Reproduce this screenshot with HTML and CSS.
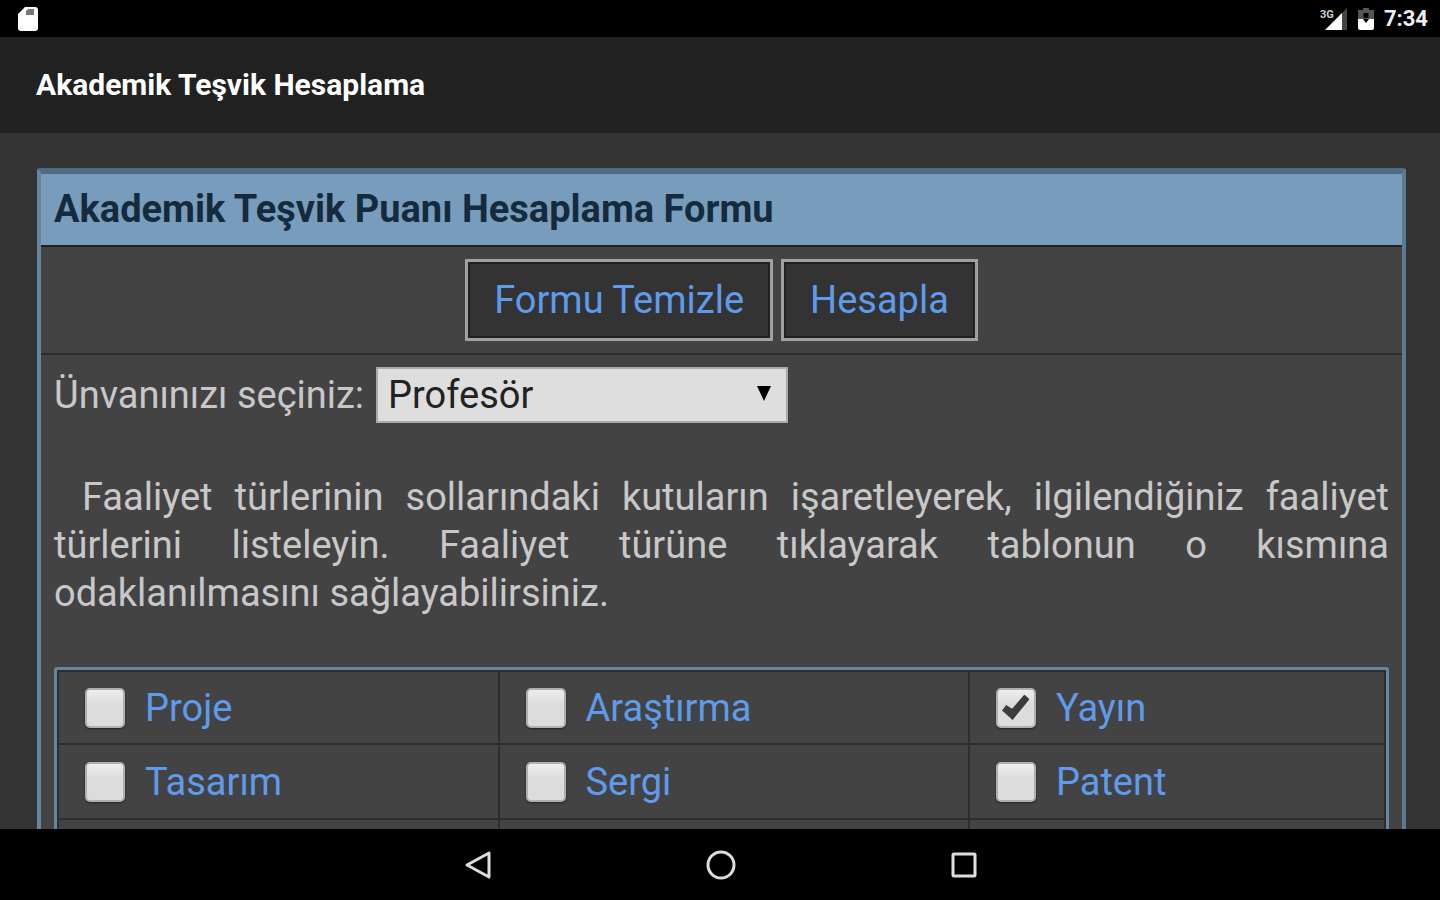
FILE: index.html
```html
<!DOCTYPE html>
<html lang="tr">
  <head>
    <meta charset="utf-8">
    <meta name="viewport" content="width=device-width, initial-scale=1">
    <title>Akademik Teşvik Hesaplama</title>
    <link rel="stylesheet" href="styles.css">
  </head>
  <body>
    <div class="status-bar">
      <svg class="sd-icon" width="20" height="24" viewBox="0 0 20 24">
        <path d="M7 0h10a3 3 0 0 1 3 3v18a3 3 0 0 1-3 3H3a3 3 0 0 1-3-3V7z" fill="#fff"/>
        <path d="M10 2h6v6H8V4z" fill="#777"/>
      </svg>
      <div class="status-right">
        <svg width="28" height="24" viewBox="0 0 28 24">
          <path d="M27 1v22h-6V7z" fill="#444"/>
          <path d="M22 6v17H5z" fill="#fff"/>
          <text class="network" x="0" y="11">3G</text>
        </svg>
        <svg width="16" height="22" viewBox="0 0 16 22">
          <path d="M5 0h6v2h5v9H0V2h5z" fill="#555"/>
          <path d="M0 11h5l3 4 3-4h5v9a2 2 0 0 1-2 2H2a2 2 0 0 1-2-2z" fill="#fff"/>
          <path d="M8 5v5" stroke="#000" stroke-width="5"/>
        </svg>
        <span class="clock">7:34</span>
      </div>
    </div>

    <header class="app-bar">
      <h1>Akademik Teşvik Hesaplama</h1>
    </header>

    <main class="content">
      <form class="panel">
        <h2 class="panel-title">Akademik Teşvik Puanı Hesaplama Formu</h2>
        <div class="buttons">
          <button type="reset" class="btn">Formu Temizle</button>
          <button type="button" class="btn">Hesapla</button>
        </div>
        <div class="panel-body">
          <div class="title-row">
            <label for="unvan">Ünvanınızı seçiniz:</label>
            <div class="select-wrap">
              <select id="unvan" name="unvan">
                <option>Profesör</option>
              </select>
              <svg class="arrow" width="14" height="15" viewBox="0 0 14 15"><path d="M0 0h14L7 15z" fill="#000"/></svg>
            </div>
          </div>
          <p class="info">Faaliyet türlerinin sollarındaki kutuların işaretleyerek, ilgilendiğiniz faaliyet türlerini listeleyin. Faaliyet türüne tıklayarak tablonun o kısmına odaklanılmasını&nbsp;sağlayabilirsiniz.</p>
          <table class="types">
            <colgroup>
              <col class="col-first">
              <col class="col-second">
              <col>
            </colgroup>
            <tr>
              <td><div class="type"><input type="checkbox" id="proje" aria-labelledby="proje-ad"><a href="#proje" id="proje-ad">Proje</a></div></td>
              <td><div class="type"><input type="checkbox" id="arastirma" aria-labelledby="arastirma-ad"><a href="#arastirma" id="arastirma-ad">Araştırma</a></div></td>
              <td><div class="type"><input type="checkbox" id="yayin" aria-labelledby="yayin-ad" checked><a href="#yayin" id="yayin-ad">Yayın</a></div></td>
            </tr>
            <tr>
              <td><div class="type"><input type="checkbox" id="tasarim" aria-labelledby="tasarim-ad"><a href="#tasarim" id="tasarim-ad">Tasarım</a></div></td>
              <td><div class="type"><input type="checkbox" id="sergi" aria-labelledby="sergi-ad"><a href="#sergi" id="sergi-ad">Sergi</a></div></td>
              <td><div class="type"><input type="checkbox" id="patent" aria-labelledby="patent-ad"><a href="#patent" id="patent-ad">Patent</a></div></td>
            </tr>
            <tr>
              <td></td>
              <td></td>
              <td></td>
            </tr>
          </table>
        </div>
      </form>
    </main>

    <nav class="nav-bar">
      <button type="button" aria-label="Geri">
        <svg width="30" height="32" viewBox="0 0 30 32"><path d="M26 4v24L4 16z" fill="none" stroke="#ddd" stroke-width="3" stroke-linejoin="round"/></svg>
      </button>
      <button type="button" aria-label="Ana ekran">
        <svg width="30" height="32" viewBox="0 0 30 32"><circle cx="15" cy="16" r="13" fill="none" stroke="#ddd" stroke-width="3"/></svg>
      </button>
      <button type="button" aria-label="Son uygulamalar">
        <svg width="30" height="32" viewBox="0 0 30 32"><rect x="4" y="5" width="22" height="22" rx="1" fill="none" stroke="#ddd" stroke-width="3"/></svg>
      </button>
    </nav>
  </body>
</html>
```
FILE: styles.css
```css
:root {
  --blue: #789dbc;
  --border: #64879f;
  --link: #5f9bec;
  --line: #2d2d2d;
  --panel: #434343;
  --text: #c8c8c8;
}

* {
  box-sizing: border-box;
}

body {
  margin: 0;
  height: 100vh;
  display: flex;
  flex-direction: column;
  overflow: hidden;
  background: #333;
  color: var(--text);
  font-family: Roboto, sans-serif;
  font-size: 38px;
  line-height: 48px;
}

.status-bar {
  flex: none;
  height: 37px;
  padding: 0 12px 0 18px;
  display: flex;
  align-items: center;
  justify-content: space-between;
  background: #000;
}

.status-right {
  display: flex;
  align-items: center;
  gap: 10px;
}

.network {
  fill: #ccc;
  font-size: 11px;
  font-weight: 700;
}

.clock {
  color: #eee;
  font-size: 22px;
  font-weight: 700;
  line-height: 36px;
}

.app-bar {
  flex: none;
  height: 96px;
  padding: 0 36px;
  display: flex;
  align-items: center;
  background: #212121;
}

.app-bar h1 {
  margin: 0;
  color: #fff;
  font-size: 30px;
  font-weight: 700;
  line-height: 36px;
}

.content {
  flex: 1;
  min-height: 0;
  overflow: hidden;
  padding: 35px 34px 0 37px;
}

.panel {
  border: 4px solid var(--border);
  border-color: #4f6c84 #5c7b93 #4f6c84 #64879f;
  border-radius: 3px;
  background: var(--panel);
}

.panel-title {
  margin: 0;
  padding: 11px 13px 12px;
  border-top: 2px solid #4f6c84;
  border-bottom: 2px solid #222;
  background: var(--blue);
  color: #152b3d;
  font-size: 38px;
  font-weight: 700;
}

.buttons {
  display: flex;
  justify-content: center;
  gap: 8px;
  padding: 12px;
  border-bottom: 2px solid var(--line);
}

.btn {
  height: 82px;
  padding: 0 26px;
  border: 3px solid #a0a0a0;
  background: #333;
  box-shadow: inset 0 0 0 2px #202020;
  color: var(--link);
  font: inherit;
}

.panel-body {
  padding: 12px 13px;
}

.title-row {
  display: flex;
  align-items: center;
  gap: 12px;
}

.select-wrap {
  position: relative;
}

.select-wrap select {
  display: block;
  width: 412px;
  height: 56px;
  padding: 0 10px;
  appearance: none;
  border: 2px solid #aaa;
  border-radius: 0;
  background: #dedede;
  color: #222;
  font: inherit;
}

.arrow {
  position: absolute;
  right: 17px;
  top: 19px;
  pointer-events: none;
}

.info {
  margin: 50px 0;
  text-align: justify;
  text-indent: 28px;
}

.types {
  width: 100%;
  table-layout: fixed;
  border: 3px solid var(--border);
  border-radius: 3px;
  border-spacing: 0;
}

.col-first {
  width: 33.3%;
}

.col-second {
  width: 35.4%;
}

.types td {
  height: 75px;
  padding: 0 26px;
  border-bottom: 2px solid var(--line);
  border-right: 2px solid var(--line);
}

.types tr:first-child td {
  border-top: 2px solid var(--line);
}

.types td:first-child {
  border-left: 2px solid var(--line);
}

.type {
  display: flex;
  align-items: center;
  gap: 20px;
}

.type a {
  color: var(--link);
  text-decoration: none;
}

.type input {
  appearance: none;
  width: 40px;
  height: 40px;
  margin: 0;
  border: 2px solid #b0b0b0;
  border-radius: 5px;
  background: linear-gradient(#eee, #dcdcdc 40%);
  box-shadow: 0 1px 2px #222;
}

.type input:checked::before {
  content: "";
  display: block;
  width: 28px;
  height: 26px;
  margin: 5px 4px;
  background: #3c3c3c;
  clip-path: polygon(0 62%, 15% 40%, 36% 55%, 80% 0, 98% 18%, 38% 98%);
}

.nav-bar {
  flex: none;
  height: 71px;
  padding-left: 2px;
  display: flex;
  justify-content: center;
  align-items: center;
  gap: 213px;
  background: #000;
}

.nav-bar button {
  padding: 0;
  border: 0;
  background: none;
  line-height: 0;
}
```
